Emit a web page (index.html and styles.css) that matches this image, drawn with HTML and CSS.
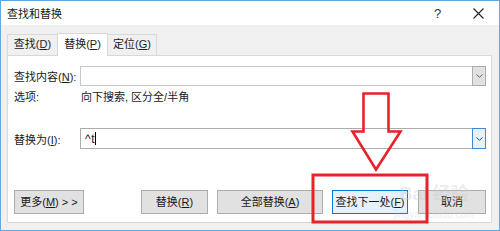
FILE: index.html
```html
<!DOCTYPE html>
<html>
<head>
<meta charset="utf-8">
<link rel="stylesheet" href="styles.css">
</head>
<body>
<div class="window">
  <div class="titlebar">
    <span class="title">查找和替换</span>
    <span class="help">?</span>
    <span class="close"><svg width="11" height="11" viewBox="0 0 11 11"><path d="M0.5 0.5L10.5 10.5M10.5 0.5L0.5 10.5" stroke="#222" stroke-width="1.1"/></svg></span>
  </div>
  <div class="content">
    <div class="tabs">
      <div class="tab">查找(<u>D</u>)</div>
      <div class="tab active">替换(<u>P</u>)</div>
      <div class="tab">定位(<u>G</u>)</div>
    </div>
    <div class="panel">
      <div class="row first">
        <label class="label">查找内容(<u>N</u>):</label>
        <div class="combo">
          <div class="field"></div>
          <div class="drop"><svg width="7" height="4" viewBox="0 0 7 4"><path d="M0.5 0.5L3.5 3.3L6.5 0.5" stroke="#666" fill="none"/></svg></div>
        </div>
      </div>
      <div class="row options">
        <span class="label">选项:</span>
        <span class="optval">向下搜索, 区分全/半角</span>
      </div>
      <div class="row second">
        <label class="label">替换为(<u>I</u>):</label>
        <div class="combo">
          <div class="field"><span class="val">^t</span><span class="caret"></span></div>
          <div class="drop focus"><svg width="7" height="4" viewBox="0 0 7 4"><path d="M0.5 0.5L3.5 3.3L6.5 0.5" stroke="#444" fill="none"/></svg></div>
        </div>
      </div>
      <div class="buttons">
        <div class="btn more">更多(<u>M</u>) &gt; &gt;</div>
        <div class="btn replace">替换(<u>R</u>)</div>
        <div class="btn all">全部替换(<u>A</u>)</div>
        <div class="btn next">查找下一处(<u>F</u>)</div>
        <div class="btn cancel">取消</div>
      </div>
    </div>
  </div>
  <div class="watermark">
    <span class="wm-logo">Bai 经验</span>
    <span class="wm-url">jingyan.baidu.com</span>
  </div>
  <svg class="annot" width="500" height="231" viewBox="0 0 500 231">
    <path d="M363.5 93.5 H388.5 V131.5 H400.5 L376 169.5 L352.5 131.5 H363.5 Z" fill="none" stroke="#e8222b" stroke-width="2.6" stroke-linejoin="miter"/>
    <rect x="313" y="175" width="114" height="47" fill="none" stroke="#e8222b" stroke-width="3"/>
  </svg>
</div>
</body>
</html>
```

FILE: styles.css
```css
* { box-sizing: border-box; }
html, body { margin: 0; padding: 0; }
body {
  font-family: "Liberation Sans", "Noto Sans CJK SC", sans-serif;
  font-size: 11px;
  color: #1a1a1a;
  background: #fff;
}
u { text-decoration: underline; text-underline-offset: 1px; }
.window {
  position: relative;
  width: 500px;
  height: 231px;
  border: 1px solid #5ea9e6;
  background: #f0f0f0;
  overflow: hidden;
}
.titlebar {
  height: 24px;
  background: #fff;
  display: flex;
  align-items: center;
  padding-left: 6px;
}
.title { flex: 1; line-height: 24px; padding-top: 2px; }
.help { width: 12px; font-size: 13px; color: #333; margin-right: 27px; }
.close { display: flex; margin-right: 15px; }
.content { padding: 7px 7px 0 6px; }
.tabs { display: flex; height: 23px; align-items: flex-end; }
.tab {
  height: 21px;
  line-height: 19px;
  border: 1px solid #d9d9d9;
  border-bottom: none;
  text-align: center;
  background: #f0f0f0;
  color: #222;
  white-space: nowrap;
}
.tab:nth-child(1) { width: 50px; border-right: none; }
.tab.active {
  width: 51px;
  height: 23px;
  line-height: 21px;
  background: #fff;
  position: relative;
  top: 1px;
  z-index: 1;
}
.tab:nth-child(3) { width: 49px; border-left: none; }
.panel {
  background: #fff;
  border: 1px solid #d9d9d9;
  height: 168px;
  padding: 0 5px 0 6px;
}
.row { display: flex; align-items: center; }
.label { width: 66px; flex: none; white-space: nowrap; }
.row.first { margin-top: 10px; height: 20px; }
.row.options { margin-top: 3px; height: 16px; line-height: 16px; }
.optval { margin-left: 1px; white-space: nowrap; }
.row.second { margin-top: 23px; height: 21px; }
.combo { flex: 1; display: flex; height: 100%; }
.field {
  flex: 1;
  border: 1px solid #adadad;
  border-right: none;
  display: flex;
  align-items: center;
  padding-left: 4px;
}
.row.first .field { border-color: #c8c8c8; }
.val { font-size: 12px; letter-spacing: 0.5px; }
.caret { width: 1px; height: 13px; background: #000; }
.drop {
  width: 14px;
  border: 1px solid #adadad;
  background: #e1e1e1;
  display: flex;
  align-items: center;
  justify-content: center;
}
.drop.focus { border-color: #3c8ad8; background: #e5f1fb; }
.buttons { display: flex; margin-top: 41px; height: 24px; }
.btn {
  height: 24px;
  line-height: 22px;
  border: 1px solid #adadad;
  background: #e1e1e1;
  text-align: center;
  color: #1a1a1a;
  white-space: nowrap;
}
.more { width: 70px; }
.replace { width: 67px; margin-left: 57px; }
.all { width: 106px; margin-left: 9px; }
.next { width: 76px; margin-left: 9px; border-color: #0078d7; background: #e5f1fb; }
.cancel { width: 68px; margin-left: 10px; }
.watermark {
  position: absolute;
  left: 390px;
  top: 182px;
  width: 86px;
  display: flex;
  flex-direction: column;
  align-items: center;
  color: rgba(200,200,200,0.35);
  pointer-events: none;
}
.wm-logo { font-size: 18px; font-weight: bold; line-height: 22px; }
.wm-url { font-size: 10px; line-height: 12px; margin-top: 4px; }
.annot { position: absolute; left: -1px; top: -1px; pointer-events: none; }
```
